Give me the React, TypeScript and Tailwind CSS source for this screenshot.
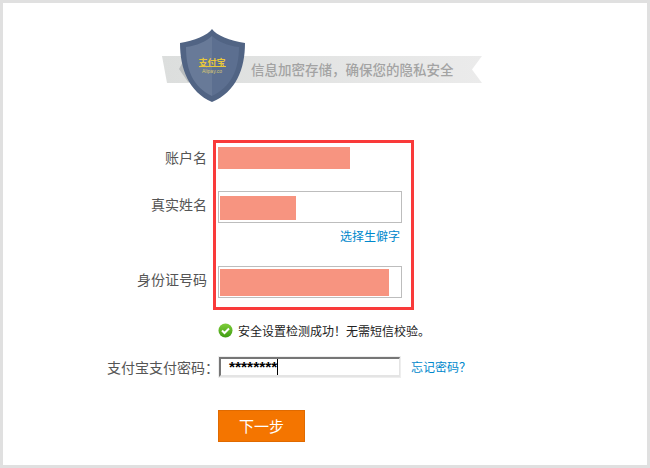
const cjk = "font-['Noto_Sans_CJK_SC','Liberation_Sans',sans-serif]";

const SecurityBanner = () => (
  <div className="relative ml-[159px] h-[74px] w-[320px]">
    <svg className="block" width="320" height="74" viewBox="0 0 320 74" fill="none">
      <defs>
        <linearGradient id="ribbon" x1="0" y1="0" x2="1" y2="0">
          <stop offset="0" stopColor="#dcdedd" />
          <stop offset="1" stopColor="#ebebeb" />
        </linearGradient>
      </defs>
      {/* ribbon */}
      <path d="M0 27H320L310 40.500L320 54H5L0 27Z" fill="url(#ribbon)" />
      <path d="M24 27L17 40L26 53L32 53V27Z" fill="#b9bdbe" />
      {/* shield */}
      <path d="M50 0C54 6 68 12 83 14C83 40 74 63 50 73C27 63 18 40 18 14C32 12 46 6 50 0Z" fill="#516484" />
      <path d="M50 7C55 12 66 17 77 18C77 41 69 58 50 67V7Z" fill="#5c6f90" />
      <path d="M50 7C45 12 34 17 24 18C24 41 31 58 50 67V7Z" fill="#687a98" />
      <text x="50" y="37" textAnchor="middle" fontFamily="'Noto Sans CJK SC', sans-serif" fontSize="9" fontWeight="700" fill="#e8c83a">支付宝</text>
      <rect x="37" y="37" width="27" height="1" fill="#e8c83a" />
      <text x="50" y="44" textAnchor="middle" fontFamily="'Liberation Sans', sans-serif" fontSize="5" fill="#d8c870">Alipay.co</text>
    </svg>
    <span className={`absolute left-[89px] top-[30px] whitespace-nowrap text-[13.500px] leading-[20px] font-medium text-[#a3a3a3] ${cjk}`}>
      {"信息加密存储\uFF0C确保您的隐私安全"}
    </span>
  </div>
);

const CheckIcon = () => (
  <svg width="15" height="15" viewBox="0 0 15 15" fill="none">
    <defs>
      <linearGradient id="ok" x1="0" y1="0" x2="0" y2="1">
        <stop offset="0" stopColor="#7fce3a" />
        <stop offset="1" stopColor="#3f9c12" />
      </linearGradient>
    </defs>
    <circle cx="7.500" cy="7.500" r="7" fill="url(#ok)" />
    <path d="M4 7.500L6.500 10L11 5.500" stroke="#fff" strokeWidth="2" />
  </svg>
);

const App = () => {
  return (
    <div className="h-[468px] w-[650px] overflow-hidden border-[3px] border-[#e0e0e0] bg-white pt-[26px]">
      <SecurityBanner />

      <div className={`mt-[37px] flex ${cjk}`}>
        {/* labels */}
        <div className="w-[204px] pt-[6px] text-right text-sm text-[#555]">
          <div className="h-[22px] leading-[22px]">账户名</div>
          <div className="mt-[24px] h-[24px] leading-[24px]">真实姓名</div>
          <div className="mt-[51px] h-[24px] leading-[24px]">身份证号码</div>
        </div>

        {/* verified fields */}
        <div className="ml-[6px] h-[170px] w-[201px] border-[3px] border-[#f93a3a] pl-[2px] pt-[4px]">
          <div className="h-[22px] w-[132px] bg-[#f79480]" />
          <div className="mt-[22px] h-[32px] w-[184px] border border-[#bdbdbd] pl-[1px] pt-[4px]">
            <div className="h-[24px] w-[76px] bg-[#f79480]" />
          </div>
          <div className="mt-[4px] h-[18px] w-[182px] text-right text-xs leading-[18px] text-[#0088cc]">选择生僻字</div>
          <div className="mt-[21px] h-[32px] w-[184px] border border-[#bdbdbd] pl-[1px] pt-[2px]">
            <div className="h-[27px] w-[169px] bg-[#f79480]" />
          </div>
        </div>
      </div>

      <div className={`ml-[215px] mt-[13px] flex h-[15px] items-center gap-[5px] text-xs text-[#222] ${cjk}`}>
        <CheckIcon />
        <span>{"安全设置检测成功\uFF01无需短信校验。"}</span>
      </div>

      <div className={`mt-[18px] flex h-[22px] items-center ${cjk}`}>
        <div className="w-[215px] whitespace-nowrap pl-[104px] text-sm text-[#555]">{"支付宝支付密码\uFF1A"}</div>
        <div className="h-[22px] w-[183px] border border-[#eeeeee]">
          <div className="flex h-[20px] items-center border-t-2 border-l-2 border-b-2 border-r border-t-[#767676] border-l-[#767676] border-b-[#e4e4e4] border-r-[#e4e4e4] pl-[8px]">
            <span className="font-['Liberation_Sans',sans-serif] text-[15.500px] leading-none font-bold text-black">********</span>
            <span className="h-[16px] w-px bg-black" />
          </div>
        </div>
        <span className="ml-[10px] whitespace-nowrap text-xs text-[#0088cc]">{"忘记密码\uFF1F"}</span>
      </div>

      <button className={`ml-[215px] mt-[32px] block h-[32px] w-[87px] border border-[#e06a00] bg-[#f47500] text-[15px] leading-[30px] text-white ${cjk}`}>
        下一步
      </button>
    </div>
  );
};

export default App;
